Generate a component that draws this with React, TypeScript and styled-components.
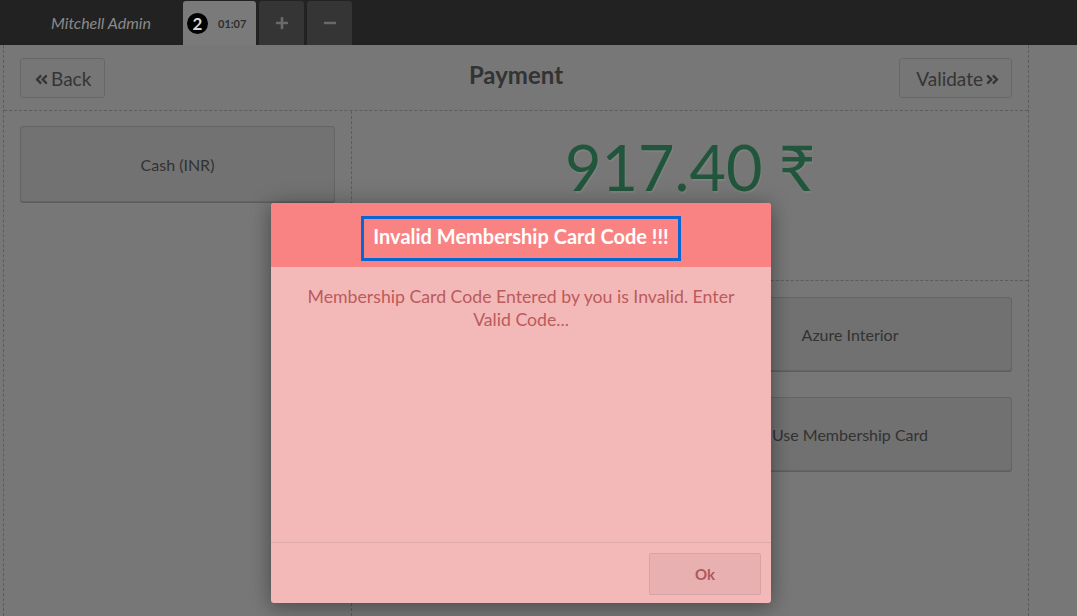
import React from "react";
import styled, { createGlobalStyle } from "styled-components";
import { FaAngleDoubleLeft, FaAngleDoubleRight, FaPlus, FaMinus } from "react-icons/fa";

const GlobalStyle = createGlobalStyle`
  html, body { margin: 0; padding: 0; }
  body {
    font-family: Lato, "Open Sans", "DejaVu Sans", sans-serif;
    background: #eeeeee;
    overflow: hidden;
  }
  * { box-sizing: border-box; }
`;

const Page = styled.div`
  width: 1077px;
  height: 616px;
  display: flex;
  flex-direction: column;
  position: relative;
  overflow: hidden;
`;

const TopBar = styled.header`
  height: 45px;
  flex: none;
  background: #222222;
  display: flex;
  align-items: flex-end;
`;

const UserName = styled.div`
  width: 183px;
  height: 45px;
  padding-left: 51px;
  display: flex;
  align-items: center;
  font-style: italic;
  font-size: 16px;
  color: #8a8a8a;
`;

const OrderTabs = styled.div`
  display: flex;
  gap: 3px;
  height: 44px;
`;

const OrderTab = styled.div`
  width: 73px;
  height: 44px;
  background: #7a7a7a;
  border-radius: 3px 3px 0 0;
  display: flex;
  align-items: center;
  padding-left: 4px;
  gap: 10px;
`;

const Count = styled.span`
  width: 21px;
  height: 21px;
  border-radius: 50%;
  background: #000;
  color: #d6d6d6;
  font-weight: 700;
  font-size: 17px;
  display: flex;
  align-items: center;
  justify-content: center;
`;

const Time = styled.span`
  font-size: 11px;
  font-weight: 700;
  color: #2e2e2e;
`;

const TabButton = styled.div`
  width: 45px;
  height: 44px;
  background: #353535;
  border-radius: 3px 3px 0 0;
  color: #6a6a6a;
  display: flex;
  align-items: center;
  justify-content: center;
`;

const Content = styled.main`
  flex: 1;
  position: relative;
  background: #eeeeee;
`;

const Screen = styled.section`
  margin-left: 3px;
  width: 1026px;
  height: 100%;
  border-left: 1px dashed #b8b8b8;
  border-right: 1px dashed #b8b8b8;
  display: flex;
  flex-direction: column;
`;

const ScreenHeader = styled.div`
  height: 66px;
  flex: none;
  border-bottom: 1px dashed #b8b8b8;
  display: grid;
  grid-template-columns: 1fr auto 1fr;
  align-items: start;
  padding: 13px 16px 0 16px;
`;

const NavButton = styled.div<{ $align: "start" | "end" }>`
  justify-self: ${(p) => p.$align};
  height: 40px;
  padding-left: ${(p) => (p.$align === "start" ? "13px" : "16px")};
  padding-right: ${(p) => (p.$align === "start" ? "13px" : "11px")};
  display: flex;
  align-items: center;
  gap: 2px;
  font-size: 19px;
  color: #6a6a6a;
  background: #ececec;
  border: 1px solid #cfcfcf;
  border-radius: 3px;
  svg { font-size: 15px; margin-top: 2px; }
`;

const Title = styled.h1`
  margin: 0;
  margin-top: 2px;
  font-size: 24px;
  font-weight: 700;
  color: #666;
`;

const ScreenBody = styled.div`
  flex: 1;
  display: flex;
`;

const LeftPane = styled.div`
  width: 348px;
  flex: none;
  border-right: 1px dashed #b8b8b8;
  padding: 15px 16px 0 16px;
`;

const MethodButton = styled.div`
  height: 76px;
  display: flex;
  align-items: center;
  justify-content: center;
  font-size: 16px;
  color: #666;
  background: #e4e4e4;
  border: 1px solid #c8c8c8;
  border-radius: 3px;
  box-shadow: 0 1px 0 #bdbdbd;
`;

const RightPane = styled.div`
  flex: 1;
  display: flex;
  flex-direction: column;
`;

const TotalDue = styled.div`
  height: 170px;
  flex: none;
  border-bottom: 1px dashed #b8b8b8;
  display: flex;
  justify-content: center;
  padding-top: 18px;
  font-size: 63px;
  color: #44ad79;
  text-shadow: 1px 2px 1px #ffffff;
  line-height: 1.2;
`;

const ActionArea = styled.div`
  display: flex;
  flex-direction: column;
  align-items: flex-end;
  gap: 26px;
  padding: 16px 16px 0 0;
`;

const ActionButton = styled(MethodButton)`
  width: 324px;
  height: 74px;
  background: #e2e2e2;
`;

const Backdrop = styled.div`
  position: absolute;
  inset: 0;
  background: rgba(0, 0, 0, 0.5);
`;

const Popup = styled.div`
  position: absolute;
  left: 271px;
  top: 158px;
  width: 500px;
  height: 400px;
  background: #f3b9b9;
  border-radius: 3px;
  display: flex;
  flex-direction: column;
  overflow: hidden;
  box-shadow: 0 0 22px rgba(0, 0, 0, 0.22), 0 6px 18px rgba(0, 0, 0, 0.2);
`;

const PopupHeader = styled.div`
  height: 64px;
  flex: none;
  background: #f98383;
  display: flex;
  justify-content: center;
  padding-top: 13px;
`;

const PopupTitle = styled.h2`
  margin: 0;
  height: 45px;
  padding: 0 9px 5px;
  border: 3px solid #0a66d2;
  display: flex;
  align-items: center;
  font-size: 20px;
  font-weight: 700;
  color: #ffffff;
`;

const PopupBody = styled.p`
  flex: 1;
  margin: 0;
  padding: 18px 24px 0;
  text-align: center;
  font-size: 17.7px;
  line-height: 23px;
  color: #bb5b5b;
`;

const PopupFooter = styled.div`
  height: 61px;
  flex: none;
  border-top: 1px solid #deaaaa;
  display: flex;
  justify-content: flex-end;
  align-items: flex-start;
  padding: 10px 10px 0 0;
`;

const OkButton = styled.div`
  width: 112px;
  height: 42px;
  background: #e8b0b0;
  border: 1px solid #daa3a3;
  border-radius: 2px;
  display: flex;
  align-items: center;
  justify-content: center;
  font-size: 15px;
  font-weight: 700;
  color: #b0585a;
`;

export default function App() {
  return (
    <>
      <GlobalStyle />
      <Page>
        <TopBar>
          <UserName>Mitchell Admin</UserName>
          <OrderTabs>
            <OrderTab>
              <Count>2</Count>
              <Time>01:07</Time>
            </OrderTab>
            <TabButton>
              <FaPlus size={14} />
            </TabButton>
            <TabButton>
              <FaMinus size={14} />
            </TabButton>
          </OrderTabs>
        </TopBar>
        <Content>
          <Screen>
            <ScreenHeader>
              <NavButton $align="start">
                <FaAngleDoubleLeft />
                Back
              </NavButton>
              <Title>Payment</Title>
              <NavButton $align="end">
                Validate
                <FaAngleDoubleRight />
              </NavButton>
            </ScreenHeader>
            <ScreenBody>
              <LeftPane>
                <MethodButton>Cash (INR)</MethodButton>
              </LeftPane>
              <RightPane>
                <TotalDue>917.40 ₹</TotalDue>
                <ActionArea>
                  <ActionButton>Azure Interior</ActionButton>
                  <ActionButton>Use Membership Card</ActionButton>
                </ActionArea>
              </RightPane>
            </ScreenBody>
          </Screen>
          <Backdrop>
            <Popup role="dialog">
              <PopupHeader>
                <PopupTitle>Invalid Membership Card Code !!!</PopupTitle>
              </PopupHeader>
              <PopupBody>
                Membership Card Code Entered by you is Invalid. Enter Valid Code...
              </PopupBody>
              <PopupFooter>
                <OkButton>Ok</OkButton>
              </PopupFooter>
            </Popup>
          </Backdrop>
        </Content>
      </Page>
    </>
  );
}
